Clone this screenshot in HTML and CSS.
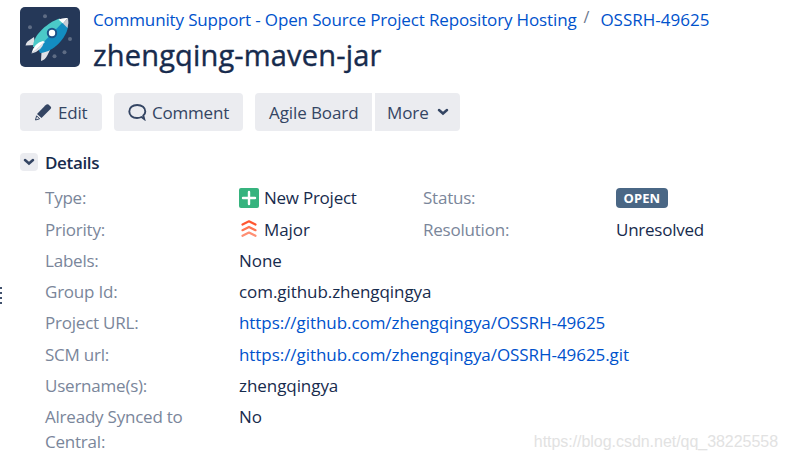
FILE: index.html
```
<!DOCTYPE html>
<html lang="en">
<head>
<meta charset="utf-8">
<title>zhengqing-maven-jar</title>
<link rel="stylesheet" href="styles.css">
</head>
<body>
<header class="issue-header">
  <svg class="avatar" viewBox="0 0 60 60">
    <rect width="60" height="60" rx="5" fill="#253858"/>
    <g fill="#5e6c84"><circle cx="25" cy="9.3" r="2"/><circle cx="10" cy="20.3" r="2"/><circle cx="50" cy="32" r="2"/><circle cx="44.5" cy="45.3" r="2"/><circle cx="34.5" cy="49.3" r="2"/></g>
    <path d="M14 30 7.5 34.5Q6 36 5.5 38.5L15 38zM21.5 45 21 54Q25 53 27 49L30 43z" fill="#dfe1e6"/>
    <path d="M39.5 11.5C29 15 13 27 13 40L20 40 44 16z" fill="#4bc9c8"/>
    <path d="M48 20C46 31 34 45 20 46L18 41 43 15z" fill="#138dc1"/>
    <path d="M38.5 12.5Q43 10.5 48 11L43 16.5z" fill="#fff"/>
    <path d="M48 11Q49 16 47.5 21L43 16.5z" fill="#c8cdd5"/>
    <path d="M23 34Q14 36 11.5 46.5L25 35z" fill="#fff"/>
    <path d="M24 35Q22 44 11.5 46.5z" fill="#dfe1e6"/>
    <circle cx="32" cy="26" r="4.2" fill="#fff" stroke="#1d5288" stroke-width="2"/>
  </svg>
  <div class="heading">
    <nav class="crumbs"><a class="crumb-project">Community Support - Open Source Project Repository Hosting</a><span class="slash">/</span><a class="crumb-key">OSSRH-49625</a></nav>
    <h1>zhengqing-maven-jar</h1>
  </div>
</header>

<div class="toolbar">
  <button class="btn edit"><svg width="18" height="18" viewBox="0 0 18 18"><path d="M1.5 17 2.6 12.8 5.6 15.8z" fill="none" stroke="#344563"/><path d="M3 11 11.5 2.2Q13 .7 14.5 1.5L17 4Q17.5 5 16.5 6L7.5 15z" fill="#344563"/></svg><span>Edit</span></button>
  <button class="btn comment"><svg width="19" height="18" viewBox="0 0 19 18"><path d="M13.5 14Q11.5 15 9 15C4.500 15 1.300 12.300 1.300 8.500S4.500 2 9.200 2 17.300 4.700 17.300 8.500Q17.300 11 15.300 12.600L16.200 16z" fill="none" stroke="#344563" stroke-width="1.9"/></svg><span>Comment</span></button>
  <div class="group">
    <button class="btn agile"><span>Agile Board</span></button>
    <button class="btn more"><span>More</span><svg width="12" height="8" viewBox="0 0 12 8"><path d="M2 2 6 5.5 10 2" fill="none" stroke="#344563" stroke-width="2.5" stroke-linecap="round"/></svg></button>
  </div>
</div>

<section>
  <h2><i class="toggle"><svg width="12" height="8" viewBox="0 0 12 8"><path d="M2 2 6 5.5 10 2" fill="none" stroke="#344563" stroke-width="2.5" stroke-linecap="round"/></svg></i><span>Details</span></h2>
  <dl>
    <dt>Type:</dt>
    <dd class="tight"><svg class="type-icon" width="20" height="20" viewBox="0 0 20 20"><rect width="20" height="20" rx="2" fill="#36b37e"/><path d="M4 10H16M10 4V16" stroke="#fff" stroke-width="2.4" stroke-linecap="round"/></svg><span>New Project</span></dd>
    <dt>Status:</dt>
    <dd><b class="lozenge">OPEN</b></dd>
    <dt>Priority:</dt>
    <dd><svg class="type-icon" width="20" height="20" viewBox="0 0 20 20" fill="none" stroke-width="2.2" stroke-linecap="round" stroke-linejoin="round"><path d="M3.5 5.6 10 2.3 16.5 5.6" stroke="#ff5630"/><path d="M3.5 11.2 10 7.9 16.5 11.2" stroke="#ff7452"/><path d="M3.5 16.8 10 13.5 16.5 16.8" stroke="#ff8f73"/></svg><span>Major</span></dd>
    <dt>Resolution:</dt>
    <dd class="tight">Unresolved</dd>
    <dt>Labels:</dt><dd class="wide">None</dd>
    <dt>Group Id:</dt><dd class="wide">com.github.zhengqingya</dd>
    <dt>Project URL:</dt><dd class="wide"><a>https://github.com/zhengqingya/OSSRH-49625</a></dd>
    <dt>SCM url:</dt><dd class="wide"><a>https://github.com/zhengqingya/OSSRH-49625.git</a></dd>
    <dt>Username(s):</dt><dd class="wide">zhengqingya</dd>
    <dt>Already Synced to Central:</dt><dd class="wide">No</dd>
  </dl>
</section>
<div class="handle"></div>
<div class="watermark">https://blog.csdn.net/qq_38225558</div>
</body>
</html>
```
FILE: styles.css
```
body { margin: 0; width: 787px; height: 460px; overflow: hidden; background: #fff; color: #172b4d; font: 400 17px/25px "Open Sans", "Noto Sans", sans-serif; }
a { color: #0052cc; }
.issue-header { display: flex; gap: 13px; padding: 7px 0 0 20px; }
.avatar { width: 60px; height: 60px; }
.crumbs { display: flex; white-space: nowrap; }
.crumb-project { letter-spacing: -.14px; }
.slash { margin: -2px 11px 0 7px; color: #6b778c; font-size: 16px; }
h1 { margin: 5px 0 0; font-size: 29px; line-height: 35px; font-weight: 500; letter-spacing: .17px; -webkit-text-stroke: .4px #172b4d; }
.toolbar { display: flex; gap: 12px; padding: 21px 0 0 20px; }
.group { display: flex; gap: 3px; }
.btn { box-sizing: border-box; display: flex; align-items: center; height: 38px; border: 0; border-radius: 4px; background: #ebecf0; color: #344563; font: inherit; padding: 0 0 0 14px; white-space: nowrap; }
.btn svg { flex: none; }
.group .btn:first-child { border-radius: 4px 0 0 4px; }
.group .btn:last-child { border-radius: 0 4px 4px 0; }
.edit { width: 82px; gap: 6px; letter-spacing: -.2px; }
.comment { width: 129px; gap: 5px; letter-spacing: -.2px; }
.agile { width: 117px; letter-spacing: -.1px; }
.more { width: 85px; gap: 8px; padding-left: 12px; letter-spacing: -.1px; }
h2 { display: flex; align-items: center; gap: 7px; margin: 19px 0 0 20px; font-size: 17px; line-height: 25px; font-weight: 600; letter-spacing: -.35px; }
.toggle { display: flex; align-items: center; justify-content: center; width: 18px; height: 18px; margin-top: -1px; border-radius: 4px; background: #ebecf0; }
dl { display: grid; grid-template-columns: 194px 184px 193px 1fr; row-gap: 6.25px; margin: 10.3px 0 0 45px; }
dt { padding-right: 40px; color: #7a869a; letter-spacing: -.22px; }
dd { display: flex; align-items: center; margin: 0; letter-spacing: -.06px; white-space: nowrap; }
.tight { letter-spacing: -.25px; }
.wide { grid-column: 2 / 5; align-self: start; }
.type-icon { margin-right: 5px; }
.lozenge { padding: 0 7.5px; border-radius: 4px; background: #4a6785; color: #fff; font-size: 13px; line-height: 20px; letter-spacing: .1px; }
.watermark { position: absolute; right: 9px; bottom: 7px; color: #e2e2e2; font: 16px/22px "Liberation Sans", sans-serif; letter-spacing: -.04px; }
.handle { position: absolute; left: 0; top: 287px; width: 2px; height: 17px; background: repeating-linear-gradient(#42526e 0 2px, #fff 2px 5px); }
```
